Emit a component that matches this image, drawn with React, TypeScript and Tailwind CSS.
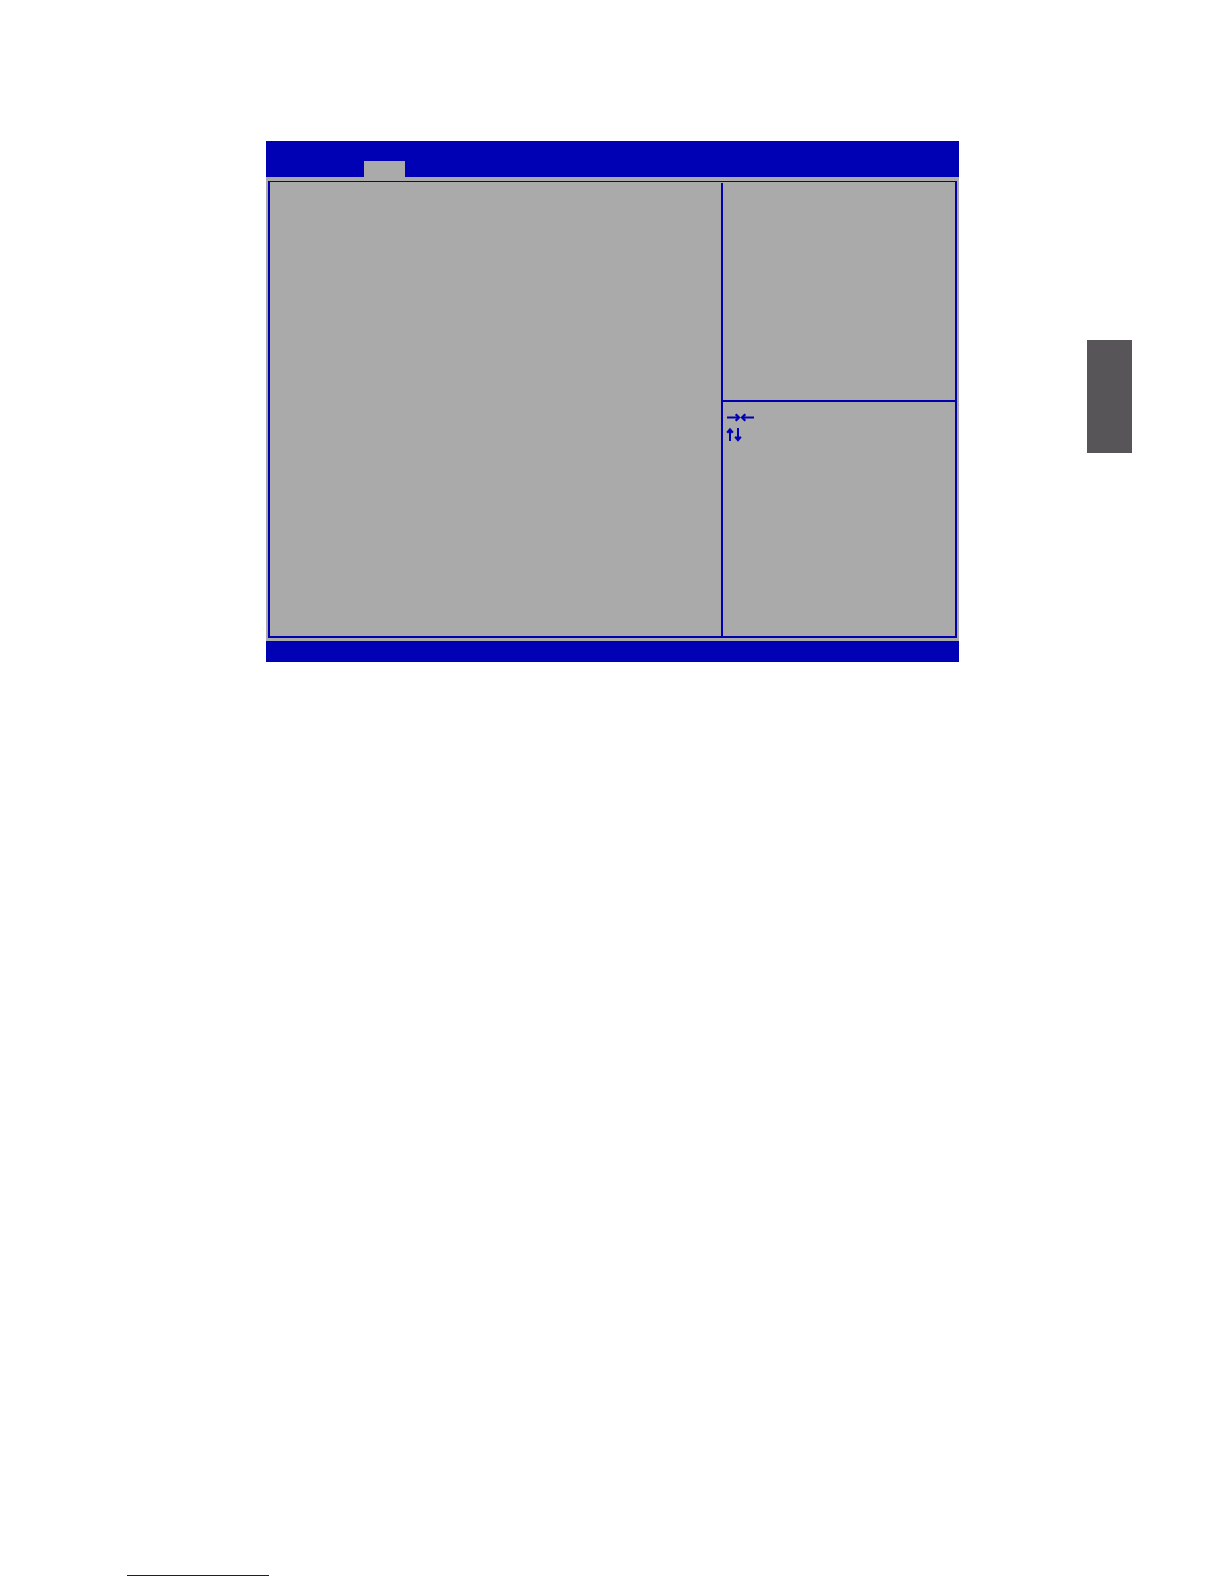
import type { ReactNode } from 'react';

interface KeyIconProps {
    label: string;
    children: ReactNode;
}

function KeyIcon({ label, children }: KeyIconProps) {
    return (
        <svg
            role="img"
            aria-label={label}
            width="28"
            height="14"
            viewBox="0 0 28 14"
            fill="none"
            stroke="currentColor"
            strokeWidth="2"
            className="overflow-visible"
        >
            {children}
        </svg>
    );
}

function SetupHeader() {
    return (
        <header className="flex h-9 items-end bg-[#0000b4] pl-[98px]">
            <button type="button" aria-label="Selected tab" className="h-4 w-[41px] bg-[#aaaaaa]" />
        </header>
    );
}

function KeyLegend() {
    return (
        <div className="flex h-[234px] flex-col gap-1 pt-2 pl-1 text-[#0000b4]">
            <KeyIcon label="Select screen">
                <path d="M0 7.5h12M15 7.5h12" />
                <path d="M8.7 4.3l3.2 3.2-3.2 3.2M18.3 4.3l-3.2 3.2 3.2 3.2" strokeWidth="2.3" />
            </KeyIcon>
            <KeyIcon label="Select item">
                <path d="M3 13V2M11 0v12" />
                <path d="M0.2 4.8L3 1.6l2.8 3.2M8.2 8.7L11 11.9l2.8-3.2" strokeWidth="2.3" />
            </KeyIcon>
        </div>
    );
}

function SetupScreen() {
    return (
        <section className="min-w-0 flex-1 bg-[#aaaaaa]">
            <SetupHeader />
            {/* Framed work area */}
            <div className="px-0.5 pt-1 pb-[3px]">
                <div className="grid grid-cols-[451fr_234fr] border-x-2 border-t border-b-2 border-[#0000b0]">
                    <main />
                    <aside className="pt-px">
                        <div className="border-l-2 border-[#0000b0]">
                            <div className="h-[219px] border-b-2 border-[#0000b0]" />
                            <KeyLegend />
                        </div>
                    </aside>
                </div>
            </div>
            <footer className="h-[21px] bg-[#0000b4]" />
        </section>
    );
}

export default function App() {
    return (
        <div className="flex min-h-screen flex-col justify-between bg-white">
            <div className="flex items-start gap-32 pt-[141px] pr-[92px] pl-[266px]">
                <SetupScreen />
                {/* Chapter marker */}
                <div className="mt-[199px] h-[113px] w-[45px] shrink-0 bg-[#575558]" />
            </div>
            <div className="pb-2 pl-[127px]">
                <hr className="w-[142px] border-t border-[#12128c]" />
            </div>
        </div>
    );
}
